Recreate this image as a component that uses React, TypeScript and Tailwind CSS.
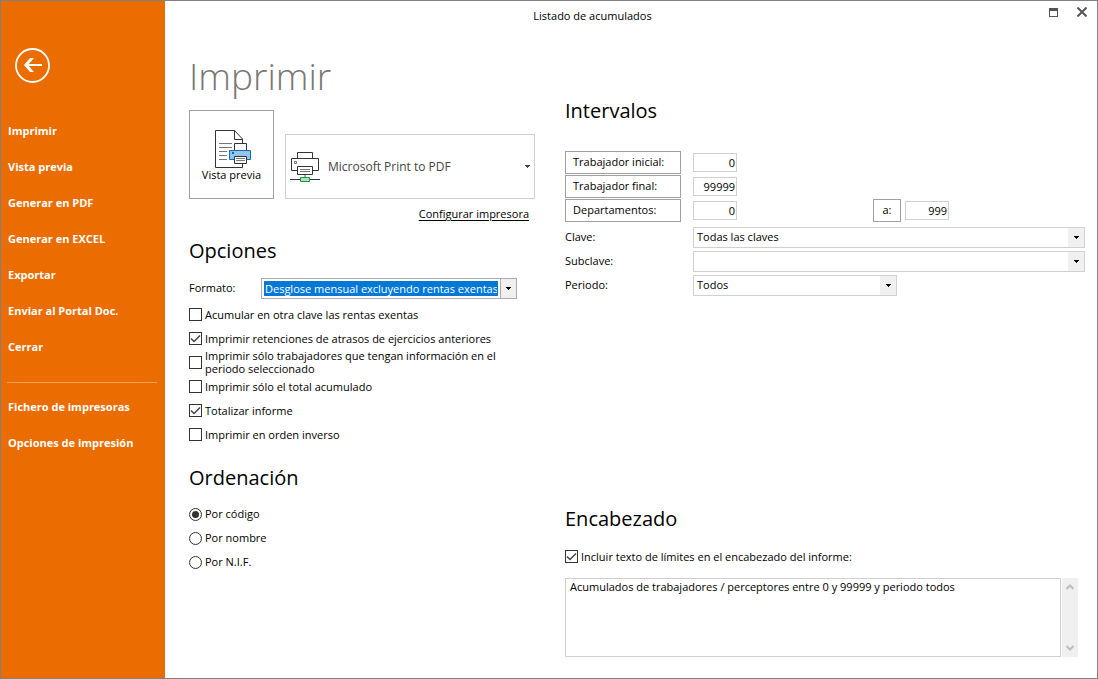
import React from 'react';

const menuItems = ['Imprimir', 'Vista previa', 'Generar en PDF', 'Generar en EXCEL', 'Exportar', 'Enviar al Portal Doc.', 'Cerrar'];
const printerItems = ['Fichero de impresoras', 'Opciones de impresión'];

const options = [
  { label: 'Acumular en otra clave las rentas exentas', checked: false },
  { label: 'Imprimir retenciones de atrasos de ejercicios anteriores', checked: true },
  { label: 'Imprimir sólo trabajadores que tengan información en el periodo seleccionado', checked: false },
  { label: 'Imprimir sólo el total acumulado', checked: false },
  { label: 'Totalizar informe', checked: true },
  { label: 'Imprimir en orden inverso', checked: false },
];

const orders = ['Por código', 'Por nombre', 'Por N.I.F.'];

const BackIcon = () => (
  <svg width="35" height="35" viewBox="0 0 35 35" fill="none" stroke="#fff" aria-hidden="true">
    <circle cx="17.5" cy="17.5" r="16.5" strokeWidth="1.8" />
    <path d="M10 17H27" strokeWidth="2" />
    <path d="M9 17L15 10H19L13 17L19 24H15Z" fill="#fff" stroke="none" />
  </svg>
);

const PreviewIcon = () => (
  <svg width="37" height="38" viewBox="0 0 37 38" fill="none" className="ml-1" aria-hidden="true">
    <path d="M0.5 0.5H19.5L27.5 9V37.5H0.5Z" fill="#fff" stroke="#333" />
    <path d="M19.5 0.5V9.5H27.5" stroke="#333" />
    <path d="M4 13.5H17M4 17.5H17M4 21.5H12M4 25.5H12M4 29.5H12" stroke="#777" />
    <path d="M19.5 13.5H31.5V20.5H19.5Z" fill="#fff" stroke="#333" />
    <path d="M14.5 20.5H35.5V29.5H14.5Z" fill="#92c5eb" stroke="#1268b3" />
    <rect x="17" y="22" width="2" height="2" fill="#1268b3" />
    <path d="M19.5 26.5H31.5V33.5H19.5Z" fill="#fff" stroke="#333" />
    <path d="M21 28.5H30M21 30.5H30" stroke="#777" />
  </svg>
);

const PrinterIcon = () => (
  <svg width="30" height="30" viewBox="0 0 30 30" fill="none" className="shrink-0" aria-hidden="true">
    <path d="M7.5 0.5H22.5V6.5H7.5Z" stroke="#333" />
    <path d="M1.5 6.5H28.5V18.5H1.5Z" fill="#fff" stroke="#333" />
    <path d="M4.5 9.5H6.5V11.5H4.5Z" stroke="#777" />
    <path d="M7.5 14.5H22.5V22.5H7.5Z" fill="#fff" stroke="#333" />
    <path d="M10 17.5H20M10 19.5H20" stroke="#777" />
    <path d="M15 23V25" stroke="#aaa" strokeWidth="2" />
    <path d="M0 27.5H30" stroke="#333" />
    <path d="M10.5 25.5H19.5V29.5H10.5Z" fill="#b5e0bd" stroke="#179a42" />
  </svg>
);

const ArrowDown = () => (
  <svg width="5" height="3" viewBox="0 0 5 3" shapeRendering="crispEdges" aria-hidden="true">
    <path d="M0 0H5V1H4V2H3V3H2V2H1V1H0Z" fill="currentColor" />
  </svg>
);

const Check = ({ label, checked }: { label: string; checked: boolean }) => (
  <label className="flex h-6 items-center gap-[3px]">
    <span className="grid size-[13px] shrink-0">
      <input
        type="checkbox"
        defaultChecked={checked}
        className="peer col-start-1 row-start-1 size-[13px] appearance-none border border-[#333] bg-white"
      />
      <svg
        viewBox="0 0 13 13"
        className="pointer-events-none invisible col-start-1 row-start-1 size-[13px] peer-checked:visible"
        fill="none"
        stroke="#444"
        strokeWidth="1.5"
      >
        <path d="M2 6.5L5 9.5L11 3.5" />
      </svg>
    </span>
    <span className="leading-[13px]">{label}</span>
  </label>
);

const Combo = ({ id, options, className }: { id: string; options: string[]; className: string }) => (
  <div className={`flex h-[21px] border border-[#d0d0d0] ${className}`}>
    <select id={id} className="min-w-0 flex-1 appearance-none bg-white px-[3px] leading-[18px]">
      {options.map((o) => (
        <option key={o}>{o}</option>
      ))}
    </select>
    <span className="pointer-events-none flex w-4 items-center justify-center bg-[#f0f0f0]">
      <ArrowDown />
    </span>
  </div>
);

const NumberBox = ({ label, value }: { label: string; value: string }) => (
  <input
    type="text"
    aria-label={label}
    defaultValue={value}
    className="h-[19px] w-11 border border-[#d0d0d0] px-px text-right leading-4"
  />
);

const RangeButton = ({ children }: { children: React.ReactNode }) => (
  <button type="button" className="h-[23px] w-[116px] border border-[#a0a0a0] px-[7px] text-left">
    {children}
  </button>
);

const Heading = ({ children }: { children: React.ReactNode }) => (
  <h2 className="text-[20px] leading-7">{children}</h2>
);

const NavLink = ({ label }: { label: string }) => (
  <a href="#" className="flex h-9 items-center px-[7px]">
    {label}
  </a>
);

export default function App() {
  return (
    <div className="flex min-h-screen border border-[#808080] bg-white font-['Open_Sans','Noto_Sans',sans-serif] text-[11px] text-black">
      {/* Sidebar */}
      <nav className="w-[164px] shrink-0 bg-[#eb6c00] pt-[47px] font-bold text-white">
        <button type="button" aria-label="Volver" className="mb-[30px] ml-[14px] block">
          <BackIcon />
        </button>
        {menuItems.map((item) => (
          <NavLink key={item} label={item} />
        ))}
        <hr className="mr-2 ml-[6px] mt-[17px] mb-[6px] border-[#f3a057]" />
        {printerItems.map((item) => (
          <NavLink key={item} label={item} />
        ))}
      </nav>

      <div className="flex min-w-0 flex-1 flex-col">
        {/* Title bar */}
        <header className="flex h-[30px] items-center">
          <div className="flex-1 text-center">Listado de acumulados</div>
          <div className="flex w-[77px] items-center justify-end gap-[19px] pr-[10px] pb-2">
            <button type="button" aria-label="Maximizar">
              <svg width="9" height="9" viewBox="0 0 9 9" shapeRendering="crispEdges">
                <path d="M0 0H9V9H0ZM1 3V8H8V3Z" fill="#555" fillRule="evenodd" />
              </svg>
            </button>
            <button type="button" aria-label="Cerrar">
              <svg width="10" height="10" viewBox="0 0 10 10" stroke="#555" strokeWidth="2">
                <path d="M0.5 0.5L9.5 9.5M9.5 0.5L0.5 9.5" />
              </svg>
            </button>
          </div>
        </header>

        <main className="flex flex-1 gap-[30px] pr-3 pb-[21px] pl-6">
          {/* Printer and options */}
          <div className="w-[346px] shrink-0">
            <h1 className="pt-5 text-[37px] leading-[50px] font-light text-[#777]">Imprimir</h1>
            <div className="mt-[9px] flex items-end gap-[11px]">
              <button
                type="button"
                className="flex h-[89px] w-[85px] shrink-0 flex-col items-center border border-[#a0a0a0] pt-[19px]"
              >
                <PreviewIcon />
                <span className="leading-[14px]">Vista previa</span>
              </button>
              <button
                type="button"
                className="flex h-[65px] flex-1 items-center gap-2 border border-[#d0d0d0] px-1 text-left text-[12px] text-[#444]"
              >
                <PrinterIcon />
                <span className="flex-1">Microsoft Print to PDF</span>
                <ArrowDown />
              </button>
            </div>
            <div className="mt-[7px] pr-[6px] text-right leading-4">
              <a href="#" className="underline underline-offset-2">
                Configurar impresora
              </a>
            </div>

            <div className="mt-[15px]">
              <Heading>Opciones</Heading>
            </div>
            <div className="mt-[13px] mb-[3px] flex items-center">
              <label htmlFor="formato" className="w-[72px]">
                Formato:
              </label>
              <div className="flex h-[21px] w-64 border border-[#ababab]">
                <select
                  id="formato"
                  className="m-[2px] min-w-0 flex-1 appearance-none bg-[#0078d7] px-px leading-[15px] text-white"
                >
                  <option>Desglose mensual excluyendo rentas exentas</option>
                </select>
                <span className="pointer-events-none flex w-4 items-center justify-center border-l border-[#ababab] bg-[#f0f0f0]">
                  <ArrowDown />
                </span>
              </div>
            </div>
            {options.map((o) => (
              <Check key={o.label} {...o} />
            ))}

            <div className="mt-[18px] mb-[10px]">
              <Heading>Ordenación</Heading>
            </div>
            {orders.map((o, i) => (
              <label key={o} className="flex h-6 items-center gap-[3px]">
                <input
                  type="radio"
                  name="orden"
                  defaultChecked={i === 0}
                  className="size-[13px] appearance-none rounded-full border border-[#333] bg-white bg-clip-content p-[2px] checked:bg-[#333]"
                />
                {o}
              </label>
            ))}
          </div>

          {/* Ranges and report header */}
          <div className="flex min-w-0 flex-1 flex-col pt-[66px]">
            <Heading>Intervalos</Heading>
            <div className="mt-[25px]">
              <div className="flex h-6 items-center gap-3">
                <RangeButton>Trabajador inicial:</RangeButton>
                <NumberBox label="Trabajador inicial" value="0" />
              </div>
              <div className="flex h-6 items-center gap-3">
                <RangeButton>Trabajador final:</RangeButton>
                <NumberBox label="Trabajador final" value="99999" />
              </div>
              <div className="flex h-6 items-center gap-3">
                <RangeButton>Departamentos:</RangeButton>
                <div className="flex w-[168px] items-center">
                  <NumberBox label="Departamento inicial" value="0" />
                </div>
                <div className="flex items-center gap-1">
                  <button type="button" className="h-[23px] w-7 border border-[#a0a0a0]">
                    a:
                  </button>
                  <NumberBox label="Departamento final" value="999" />
                </div>
              </div>
            </div>
            <div className="mt-[3px]">
              <div className="flex h-6 items-center">
                <label htmlFor="clave" className="w-32 shrink-0">
                  Clave:
                </label>
                <Combo id="clave" options={['Todas las claves']} className="flex-1" />
              </div>
              <div className="flex h-6 items-center">
                <label htmlFor="subclave" className="w-32 shrink-0">
                  Subclave:
                </label>
                <Combo id="subclave" options={['']} className="flex-1" />
              </div>
              <div className="flex h-6 items-center">
                <label htmlFor="periodo" className="w-32 shrink-0">
                  Periodo:
                </label>
                <Combo id="periodo" options={['Todos']} className="w-[204px]" />
              </div>
            </div>

            <div className="mt-auto">
              <Heading>Encabezado</Heading>
              <div className="mt-[11px] mb-[10px]">
                <Check label="Incluir texto de límites en el encabezado del informe:" checked />
              </div>
              <div className="flex gap-px pr-[7px]">
                <textarea
                  aria-label="Texto del encabezado"
                  defaultValue="Acumulados de trabajadores / perceptores entre 0 y 99999 y periodo todos"
                  className="h-[79px] min-w-0 flex-1 resize-none overflow-hidden border border-[#d0d0d0] px-1 leading-4"
                />
                <div className="flex w-4 flex-col items-center justify-between bg-[#f0f0f0] py-[6px] text-[#bdbdbd]">
                  <svg width="8" height="6" viewBox="0 0 8 6" fill="none" stroke="currentColor" strokeWidth="2">
                    <path d="M0.5 5L4 1.5L7.5 5" />
                  </svg>
                  <svg width="8" height="6" viewBox="0 0 8 6" fill="none" stroke="currentColor" strokeWidth="2">
                    <path d="M0.5 1L4 4.5L7.5 1" />
                  </svg>
                </div>
              </div>
            </div>
          </div>
        </main>
      </div>
    </div>
  );
}
